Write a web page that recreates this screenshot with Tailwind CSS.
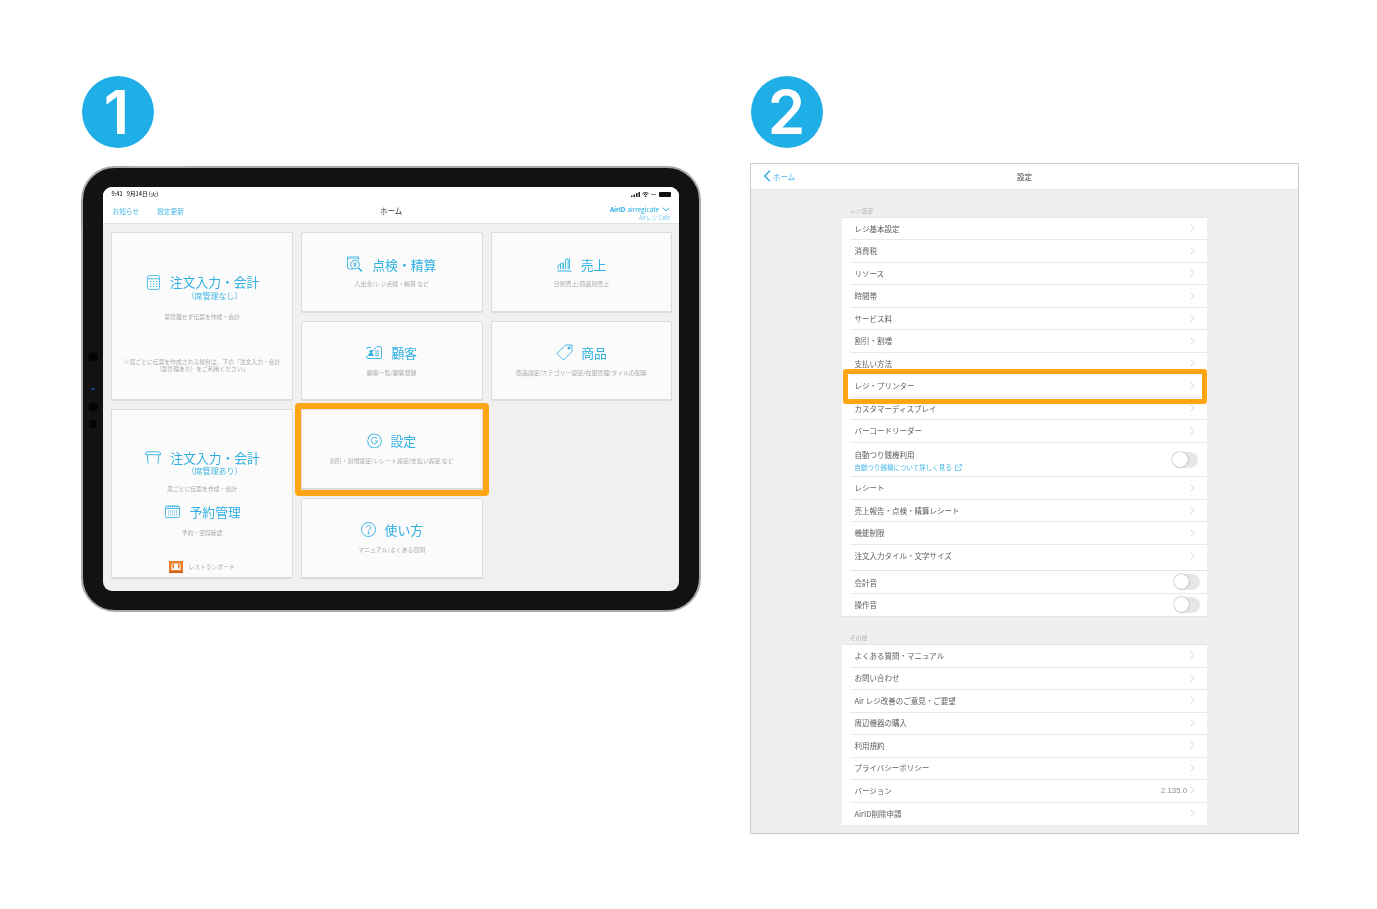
<!DOCTYPE html>
<html lang="ja">
<head>
<meta charset="utf-8">
<title>設定</title>
<script src="https://cdn.jsdelivr.net/npm/@tailwindcss/browser@4"></script>
</head>
<body class="bg-white font-['Noto_Sans_CJK_JP','Noto_Sans',sans-serif]">
<div class="flex h-[909px] w-[1377px] overflow-hidden bg-white pl-[81px] pt-[76px] blur-[0.3px]">

  <!-- Step 1 -->
  <section class="w-[620px]">
    <div class="ml-px flex h-[72px] w-[72px] items-center justify-center rounded-full bg-[#1fafe6] pr-[3px] font-['Inter',sans-serif] text-[60px] font-semibold leading-none text-white">1</div>
    <div class="relative mt-[18px] h-[446px] w-[620px] rounded-[34px] border-2 border-[#a9a9a9] bg-[#121212] pb-[20px] pl-[20px] pr-[20px] pt-[19px]">
      <span class="absolute -top-[2.5px] left-[48px] h-px w-[28px] bg-[#b5b5b5]"></span>
      <span class="absolute -top-[2.5px] left-[76px] h-px w-[28px] bg-[#b5b5b5]"></span>
      <span class="absolute -left-[2.5px] top-[32px] h-[27px] w-px bg-[#999]"></span>
      <span class="absolute left-[5px] top-[184px] h-[10px] w-[10px] rounded-full bg-[#050505]"></span>
      <span class="absolute left-[8px] top-[220px] h-[1.5px] w-[1.5px] rounded-full bg-[#1d4f9c]"></span>
      <span class="absolute left-[10px] top-[220px] h-[1.5px] w-[1.5px] rounded-full bg-[#1d4f9c]"></span>
      <span class="absolute left-[5px] top-[234px] h-[10px] w-[10px] rounded-full bg-[#050505]"></span>
      <span class="absolute left-[6px] top-[252px] h-[8px] w-[8px] rounded-full bg-[#050505]"></span>

      <div class="relative flex h-[404px] w-[576px] flex-col overflow-hidden rounded-[9px] bg-[#f0f0f0]">
        <header class="h-[36.500px] shrink-0 border-b border-[#e2e2e2] bg-white">
          <div class="flex h-[14px] items-center justify-between pl-[8.5px] pr-[8px] pt-[0.5px] text-[5.6px] font-medium text-[#222]">
            <span class="flex gap-[4px]"><span>9:41</span><span>9月14日 (火)</span></span>
            <span class="flex items-center gap-[2px]">
              <svg width="9" height="5" viewBox="0 0 9 5"><path d="M0 3.5h1.5V5H0zM2.500 2.500H4V5H2.500zM5 1h1.500v4H5zM7.500 0H9v5H7.500z" fill="#222"/></svg>
              <svg width="7" height="5" viewBox="0 0 7 5"><path d="M.5 1.800a4.200 4.200 0 0 1 6 0M1.600 3a2.600 2.600 0 0 1 3.800 0" fill="none" stroke="#222"/><circle cx="3.500" cy="4.300" r=".8" fill="#222"/></svg>
              <span class="h-px w-[5px] bg-[#888]"></span>
              <span class="ml-px h-[4.500px] w-[12px] rounded-[1px] bg-[#111]"></span>
            </span>
          </div>
          <div class="relative flex h-[21px] items-center pl-[9.5px] pr-[9px] text-[6.7px] text-[#45b8e8]">
            <span>お知らせ</span>
            <span class="ml-[18px]">設定更新</span>
            <span class="absolute left-[277px] top-[2px] text-[7.500px] leading-[15px] text-[#333]">ホーム</span>
            <div class="ml-auto mt-[3px] flex flex-col items-end">
              <span class="flex items-center gap-[2px] text-[6.400px] leading-[9px] text-[#25ace4]"><b class="font-bold">AirID</b><span>airregicate</span>
                <svg class="ml-px" width="8" height="5" viewBox="0 0 8 5"><path d="M.6.6l3.400 3.400L7.400.6" fill="none" stroke="#25ace4" stroke-width="1"/></svg></span>
              <span class="text-[5.600px] leading-[8px] text-[#7accee]">Airレジ Cafe</span>
            </div>
          </div>
        </header>

        <div class="grid grid-cols-[repeat(3,181.67px)] grid-rows-[repeat(4,80.67px)] gap-2 pl-[8.300px] pt-[8.500px]">

          <article class="row-span-2 flex flex-col items-center rounded-[2px] border border-b-2 border-[#dcdcdc] bg-[#fbfbfb] pt-[40px]">
            <div class="flex h-[18px] items-center gap-[10px] pl-[2px] text-[12.800px] text-[#2fb0e4]">
              <svg width="13" height="15" viewBox="0 0 13 15" fill="none" stroke="#2fb0e4" stroke-width=".8"><rect x=".5" y=".5" width="12" height="14" rx="2"/><path d="M.5 3.800h12M3 6.500h1.500M6 6.500h1.500M9 6.500h1.500M3 9h1.500M6 9h1.500M9 9h1.500M3 11.500h1.500M6 11.500h1.500M9 11.500h1.500"/></svg>
              <span>注文入力・会計</span>
            </div>
            <p class="-mt-[1px] pl-[25px] text-[8px] leading-[11px] text-[#42b7e7]">（席管理なし）</p>
            <p class="mt-[11px] text-[5.800px] leading-[10px] text-[#a8a8a8]">席管理せず伝票を作成・会計</p>
            <p class="mt-[37px] text-center text-[5.800px] leading-[6.500px] text-[#aaa]">※席ごとに伝票を作成される場合は、下の「注文入力・会計<br>（席管理あり）をご利用ください」</p>
          </article>

          <article class="flex flex-col items-center justify-center rounded-[2px] border border-b-2 border-[#dcdcdc] bg-[#fbfbfb] pt-[1px]">
            <div class="flex h-[18px] items-center gap-[9px] text-[12.800px] text-[#2fb0e4]">
              <svg width="16" height="16" viewBox="0 0 16 16" fill="none" stroke="#2fb0e4" stroke-width=".9"><path d="M6 13H2.500a2 2 0 0 1-2-2V1h11v3.500"/><path d="M.5 2.500h11" stroke-dasharray="1 1"/><circle cx="8" cy="8.500" r="4.300"/><path d="M6.300 6.200L8 8.500l1.700-2.300M8 8.500v2.600M6.500 9h3"/><path d="M11.200 11.700l3.800 3.800" stroke-width="1.500"/></svg>
              <span>点検・精算</span>
            </div>
            <p class="mt-[6px] text-[5.900px] leading-[10px] text-[#a8a8a8]">入出金/レジ点検・精算 など</p>
          </article>

          <article class="flex flex-col items-center justify-center rounded-[2px] border border-b-2 border-[#dcdcdc] bg-[#fbfbfb] pt-[1px]">
            <div class="flex h-[18px] items-center gap-[9px] text-[12.800px] text-[#2fb0e4]">
              <svg width="15" height="15" viewBox="0 0 15 15" fill="none" stroke="#2fb0e4" stroke-width=".9"><path d="M1 12V9a1 1 0 0 1 2.500 0v3M3.500 12V7a1.200 1.200 0 0 1 2.500 0v5M6.500 12V6M8.500 12V3a1.300 1.300 0 0 1 2.600 0v9M12.500 12V1"/><path d="M.5 14h14" stroke-width="1.100"/></svg>
              <span>売上</span>
            </div>
            <p class="mt-[6px] text-[5.900px] leading-[10px] text-[#a8a8a8]">日別売上/商品別売上</p>
          </article>

          <article class="flex flex-col items-center justify-center rounded-[2px] border border-b-2 border-[#dcdcdc] bg-[#fbfbfb]">
            <div class="flex h-[18px] items-center gap-[9px] text-[12.800px] text-[#2fb0e4]">
              <svg width="16" height="13" viewBox="0 0 16 13" fill="none" stroke="#2fb0e4" stroke-width=".9"><path d="M.5 3a1.500 1.500 0 0 1 1.500-1.500h3M10 1.500l1-1h2.500a2 2 0 0 1 2 2V11a1.500 1.500 0 0 1-1.500 1.500H2A1.500 1.500 0 0 1 .5 11z"/><circle cx="5" cy="5.500" r="1.200" fill="#2fb0e4"/><path d="M2.800 9.500c0-3 4.400-3 4.400 0z" fill="#2fb0e4"/><path d="M9 5h4M9 7.200h4M9 9.400h4"/></svg>
              <span>顧客</span>
            </div>
            <p class="mt-[6.500px] text-[5.900px] leading-[10px] text-[#a8a8a8]">顧客一覧/顧客登録</p>
          </article>

          <article class="flex flex-col items-center justify-center rounded-[2px] border border-b-2 border-[#dcdcdc] bg-[#fbfbfb]">
            <div class="flex h-[18px] items-center gap-[8px] text-[12.800px] text-[#2fb0e4]">
              <svg width="17" height="17" viewBox="0 0 17 17" fill="none" stroke="#2fb0e4" stroke-width=".9"><path d="M9.500 1H16v6.500L7.500 16 1 9.500z"/><circle cx="13" cy="4" r="1.100" fill="#2fb0e4"/></svg>
              <span>商品</span>
            </div>
            <p class="mt-[6.500px] text-[5.900px] leading-[10px] text-[#a8a8a8]">商品設定/カテゴリー設定/在庫管理/タイルの配置</p>
          </article>

          <article class="row-span-2 flex flex-col items-center rounded-[2px] border border-b-2 border-[#dcdcdc] bg-[#fbfbfb] pt-[38.500px]">
            <div class="flex h-[18px] items-center gap-[9px] pl-[1px] text-[12.800px] text-[#2fb0e4]">
              <svg width="16" height="13" viewBox="0 0 16 13" fill="none" stroke="#2fb0e4" stroke-width=".9"><path d="M.5 2.200C.5 1 2 .7 8 .7s7.500.3 7.500 1.500v1.500H.5zM2.300 3.700L3 12.500M13.700 3.700L13 12.500"/></svg>
              <span>注文入力・会計</span>
            </div>
            <p class="-mt-[2px] pl-[25px] text-[8px] leading-[11px] text-[#42b7e7]">（席管理あり）</p>
            <p class="mt-[8.500px] text-[5.800px] leading-[10px] text-[#a8a8a8]">席ごとに伝票を作成・会計</p>
            <div class="mt-[8px] flex h-[18px] items-center gap-[10px] pl-[1px] text-[12.800px] text-[#2fb0e4]">
              <svg width="15" height="13" viewBox="0 0 15 13" fill="none" stroke="#2fb0e4" stroke-width=".8"><rect x=".5" y="1.200" width="14" height="11.300" rx=".8"/><path d="M3 0v2.500M5.200 0v2.500M7.500 0v2.500M9.800 0v2.500M12 0v2.500M.5 3.500h14"/><path d="M3 6h9M3 8h9M3 10h9" stroke-dasharray="1 1"/></svg>
              <span>予約管理</span>
            </div>
            <p class="mt-[8px] text-[5.800px] leading-[10px] text-[#a8a8a8]">予約・空席確認</p>
            <div class="mt-[23px] flex items-center gap-[5px]">
              <svg width="14" height="12" viewBox="0 0 14 12"><rect width="14" height="12" fill="#ee7d2c"/><rect y="10.500" width="14" height="1.500" fill="#c95f17"/><rect x="2.500" y="2.500" width="9" height="6.500" fill="#fff"/><rect x="3.500" y="2.500" width="1.500" height="5" fill="#ee7d2c"/><rect x="9" y="2.500" width="1.500" height="5" fill="#ee7d2c"/></svg>
              <span class="text-[5.800px] leading-[10px] text-[#a8a8a8]">レストランボード</span>
            </div>
          </article>

          <article class="flex flex-col items-center justify-center rounded-[2px] border border-b-2 border-[#dcdcdc] bg-[#fbfbfb]">
            <div class="flex h-[18px] items-center gap-[8px] text-[12.800px] text-[#2fb0e4]">
              <svg width="15" height="15" viewBox="0 0 15 15" fill="none" stroke="#2fb0e4" stroke-width=".9"><path d="M7.500.8l1.700 1.100 2-.2.900 1.800 1.800.9-.2 2 1 1.600-1 1.600.2 2-1.800.9-.9 1.800-2-.2-1.700 1.100-1.700-1.100-2 .2-.9-1.800-1.800-.9.2-2L.5 7.500l1-1.600-.2-2 1.800-.9.900-1.800 2 .2z"/><path d="M10.300 5.800A3.200 3.200 0 1 0 10.700 8H8.200"/></svg>
              <span>設定</span>
            </div>
            <p class="mt-[6.500px] text-[5.900px] leading-[10px] text-[#a8a8a8]">割引・割増設定/レシート設定/支払い設定 など</p>
          </article>

          <div></div>

          <article class="flex flex-col items-center justify-center rounded-[2px] border border-b-2 border-[#dcdcdc] bg-[#fbfbfb]">
            <div class="flex h-[18px] items-center gap-[9px] text-[12.800px] text-[#2fb0e4]">
              <svg width="15" height="15" viewBox="0 0 15 15" fill="none" stroke="#2fb0e4" stroke-width=".9"><circle cx="7.500" cy="7.500" r="7"/><path d="M5.300 5.700a2.200 2.200 0 1 1 3.400 1.900c-.8.500-1.200.9-1.200 1.900"/><circle cx="7.500" cy="11.200" r=".6" fill="#2fb0e4"/></svg>
              <span>使い方</span>
            </div>
            <p class="mt-[6.500px] text-[5.900px] leading-[10px] text-[#a8a8a8]">マニュアル/よくある質問</p>
          </article>
        </div>
      </div>

      <div class="absolute left-[212px] top-[234.700px] h-[93.500px] w-[194px] rounded-[4px] border-[6px] border-[#ffa514]"></div>
    </div>
  </section>

  <!-- Step 2 -->
  <section class="ml-[49px] w-[549px]">
    <div class="ml-px flex h-[72px] w-[72px] items-center justify-center rounded-full bg-[#1fafe6] pr-[1px] font-['Inter',sans-serif] text-[60px] font-semibold leading-none text-white">2</div>
    <div class="mt-[15px] flex h-[671px] w-[549px] flex-col border border-[#cbcbcb] bg-[#efefef]">
      <header class="relative flex h-[25.500px] shrink-0 items-center justify-center border-b border-[#e3e3e3] bg-white text-[7.500px] text-[#444]">
        <span class="absolute left-[12px] flex items-center gap-[2px] text-[#43b5e6]">
          <svg width="8" height="12" viewBox="0 0 8 12"><path d="M7 .8L1.600 6 7 11.200" fill="none" stroke="#25ace4" stroke-width="1.300"/></svg>
          <span>ホーム</span>
        </span>
        <span>設定</span>
      </header>

      <div class="ml-[91px] w-[365px]">
        <p class="pl-2 pt-[14px] text-[5.800px] leading-[13.500px] text-[#b0b0b0]">レジ設定</p>

        <div class="relative border-y border-[#e4e4e4] bg-white text-[7.500px] text-[#5c5c5c]">
          <div class="ml-2 flex h-[22.400px] items-center justify-between border-b border-[#e9e9e9] pb-px pl-[4.500px] pr-[12px]"><span>レジ基本設定</span><svg width="5" height="8" viewBox="0 0 5 8"><path d="M.7.7L4.200 4 .7 7.300" fill="none" stroke="#c8c8c8" stroke-width=".8"/></svg></div>
          <div class="ml-2 flex h-[22.500px] items-center justify-between border-b border-[#e9e9e9] pb-px pl-[4.500px] pr-[12px]"><span>消費税</span><svg width="5" height="8" viewBox="0 0 5 8"><path d="M.7.7L4.200 4 .7 7.300" fill="none" stroke="#c8c8c8" stroke-width=".8"/></svg></div>
          <div class="ml-2 flex h-[22.500px] items-center justify-between border-b border-[#e9e9e9] pb-px pl-[4.500px] pr-[12px]"><span>リソース</span><svg width="5" height="8" viewBox="0 0 5 8"><path d="M.7.7L4.200 4 .7 7.300" fill="none" stroke="#c8c8c8" stroke-width=".8"/></svg></div>
          <div class="ml-2 flex h-[22.500px] items-center justify-between border-b border-[#e9e9e9] pb-px pl-[4.500px] pr-[12px]"><span>時間帯</span><svg width="5" height="8" viewBox="0 0 5 8"><path d="M.7.7L4.200 4 .7 7.300" fill="none" stroke="#c8c8c8" stroke-width=".8"/></svg></div>
          <div class="ml-2 flex h-[22.500px] items-center justify-between border-b border-[#e9e9e9] pb-px pl-[4.500px] pr-[12px]"><span>サービス料</span><svg width="5" height="8" viewBox="0 0 5 8"><path d="M.7.7L4.200 4 .7 7.300" fill="none" stroke="#c8c8c8" stroke-width=".8"/></svg></div>
          <div class="ml-2 flex h-[22.500px] items-center justify-between border-b border-[#e9e9e9] pb-px pl-[4.500px] pr-[12px]"><span>割引・割増</span><svg width="5" height="8" viewBox="0 0 5 8"><path d="M.7.7L4.200 4 .7 7.300" fill="none" stroke="#c8c8c8" stroke-width=".8"/></svg></div>
          <div class="ml-2 flex h-[22.500px] items-center justify-between border-b border-[#e9e9e9] pb-px pl-[4.500px] pr-[12px]"><span>支払い方法</span><svg width="5" height="8" viewBox="0 0 5 8"><path d="M.7.7L4.200 4 .7 7.300" fill="none" stroke="#c8c8c8" stroke-width=".8"/></svg></div>
          <div class="ml-2 flex h-[22.500px] items-center justify-between border-b border-[#e9e9e9] pb-px pl-[4.500px] pr-[12px]"><span>レジ・プリンター</span><svg width="5" height="8" viewBox="0 0 5 8"><path d="M.7.7L4.200 4 .7 7.300" fill="none" stroke="#c8c8c8" stroke-width=".8"/></svg></div>
          <div class="ml-2 flex h-[22.500px] items-center justify-between border-b border-[#e9e9e9] pb-px pl-[4.500px] pr-[12px]"><span>カスタマーディスプレイ</span><svg width="5" height="8" viewBox="0 0 5 8"><path d="M.7.7L4.200 4 .7 7.300" fill="none" stroke="#c8c8c8" stroke-width=".8"/></svg></div>
          <div class="ml-2 flex h-[22.500px] items-center justify-between border-b border-[#e9e9e9] pb-px pl-[4.500px] pr-[12px]"><span>バーコードリーダー</span><svg width="5" height="8" viewBox="0 0 5 8"><path d="M.7.7L4.200 4 .7 7.300" fill="none" stroke="#c8c8c8" stroke-width=".8"/></svg></div>
          <div class="ml-2 flex h-[34.500px] items-center justify-between border-b border-[#e9e9e9] pl-[4.500px] pr-[9px]">
            <div class="flex flex-col pt-[2px]">
              <span class="leading-[11px]">自動つり銭機利用</span>
              <span class="mt-[3.500px] flex items-center gap-[3px] text-[6.500px] leading-[9px] text-[#45b8e8]">自動つり銭機について詳しく見る
                <svg width="7" height="7" viewBox="0 0 7 7" fill="none" stroke="#45b8e8" stroke-width=".7"><path d="M3 1.200H.5v5.300h5.300V4M3 4l3.500-3.500M4.200.4h2.400v2.400"/></svg></span>
            </div>
            <span class="relative h-[16px] w-[26px] rounded-full bg-[#e6e6e8]"><span class="absolute left-0 top-0 h-[15.500px] w-[15.500px] rounded-full bg-white shadow-[0_0_1.500px_#777]"></span></span>
          </div>
          <div class="ml-2 flex h-[22.500px] items-center justify-between border-b border-[#e9e9e9] pb-px pl-[4.500px] pr-[12px]"><span>レシート</span><svg width="5" height="8" viewBox="0 0 5 8"><path d="M.7.7L4.200 4 .7 7.300" fill="none" stroke="#c8c8c8" stroke-width=".8"/></svg></div>
          <div class="ml-2 flex h-[22.500px] items-center justify-between border-b border-[#e9e9e9] pb-px pl-[4.500px] pr-[12px]"><span>売上報告・点検・精算レシート</span><svg width="5" height="8" viewBox="0 0 5 8"><path d="M.7.7L4.200 4 .7 7.300" fill="none" stroke="#c8c8c8" stroke-width=".8"/></svg></div>
          <div class="ml-2 flex h-[22.500px] items-center justify-between border-b border-[#e9e9e9] pb-px pl-[4.500px] pr-[12px]"><span>機能制限</span><svg width="5" height="8" viewBox="0 0 5 8"><path d="M.7.7L4.200 4 .7 7.300" fill="none" stroke="#c8c8c8" stroke-width=".8"/></svg></div>
          <div class="ml-2 flex h-[26.500px] items-center justify-between border-b border-[#e4e4e4] pb-[4px] pl-[4.500px] pr-[12px]"><span>注文入力タイル・文字サイズ</span><svg width="5" height="8" viewBox="0 0 5 8"><path d="M.7.7L4.200 4 .7 7.300" fill="none" stroke="#c8c8c8" stroke-width=".8"/></svg></div>
          <div class="ml-2 flex h-[22.500px] items-center justify-between border-b border-[#e9e9e9] pl-[4.500px] pr-[7px]"><span>会計音</span>
            <span class="relative h-[15.500px] w-[26px] rounded-full bg-[#e6e6e8]"><span class="absolute left-0 top-0 h-[15px] w-[15px] rounded-full bg-white shadow-[0_0_1.500px_#777]"></span></span></div>
          <div class="ml-2 flex h-[22px] items-center justify-between pl-[4.500px] pr-[7px]"><span>操作音</span>
            <span class="relative h-[15.500px] w-[26px] rounded-full bg-[#e6e6e8]"><span class="absolute left-0 top-0 h-[15px] w-[15px] rounded-full bg-white shadow-[0_0_1.500px_#777]"></span></span></div>

          <div class="absolute left-[1.300px] top-[151px] h-[34.700px] w-[363.700px] rounded-[3px] border-[5px] border-[#ffa514]"></div>
        </div>

        <p class="pl-2 pt-[14.500px] text-[5.800px] leading-[13px] text-[#b0b0b0]">その他</p>

        <div class="border-t border-[#e4e4e4] bg-white text-[7.500px] text-[#5c5c5c]">
          <div class="ml-2 flex h-[22.500px] items-center justify-between border-b border-[#e9e9e9] pb-[1.500px] pl-[4.500px] pr-[12px]"><span>よくある質問・マニュアル</span><svg width="5" height="8" viewBox="0 0 5 8"><path d="M.7.7L4.200 4 .7 7.300" fill="none" stroke="#c8c8c8" stroke-width=".8"/></svg></div>
          <div class="ml-2 flex h-[22.500px] items-center justify-between border-b border-[#e9e9e9] pb-[1.500px] pl-[4.500px] pr-[12px]"><span>お問い合わせ</span><svg width="5" height="8" viewBox="0 0 5 8"><path d="M.7.7L4.200 4 .7 7.300" fill="none" stroke="#c8c8c8" stroke-width=".8"/></svg></div>
          <div class="ml-2 flex h-[22.500px] items-center justify-between border-b border-[#e9e9e9] pb-[1.500px] pl-[4.500px] pr-[12px]"><span>Air レジ改善のご意見・ご要望</span><svg width="5" height="8" viewBox="0 0 5 8"><path d="M.7.7L4.200 4 .7 7.300" fill="none" stroke="#c8c8c8" stroke-width=".8"/></svg></div>
          <div class="ml-2 flex h-[22.500px] items-center justify-between border-b border-[#e9e9e9] pb-[1.500px] pl-[4.500px] pr-[12px]"><span>周辺機器の購入</span><svg width="5" height="8" viewBox="0 0 5 8"><path d="M.7.7L4.200 4 .7 7.300" fill="none" stroke="#c8c8c8" stroke-width=".8"/></svg></div>
          <div class="ml-2 flex h-[22.500px] items-center justify-between border-b border-[#e9e9e9] pb-[1.500px] pl-[4.500px] pr-[12px]"><span>利用規約</span><svg width="5" height="8" viewBox="0 0 5 8"><path d="M.7.7L4.200 4 .7 7.300" fill="none" stroke="#c8c8c8" stroke-width=".8"/></svg></div>
          <div class="ml-2 flex h-[22.500px] items-center justify-between border-b border-[#e9e9e9] pb-[1.500px] pl-[4.500px] pr-[12px]"><span>プライバシーポリシー</span><svg width="5" height="8" viewBox="0 0 5 8"><path d="M.7.7L4.200 4 .7 7.300" fill="none" stroke="#c8c8c8" stroke-width=".8"/></svg></div>
          <div class="ml-2 flex h-[22.500px] items-center justify-between border-b border-[#e9e9e9] pb-[1.500px] pl-[4.500px] pr-[12px]"><span>バージョン</span><span class="flex items-center gap-[3px]"><span class="font-['Liberation_Sans',sans-serif] text-[7.800px] text-[#8e8e8e]">2.135.0</span><svg width="5" height="8" viewBox="0 0 5 8"><path d="M.7.7L4.200 4 .7 7.300" fill="none" stroke="#c8c8c8" stroke-width=".8"/></svg></span></div>
          <div class="ml-2 flex h-[22.500px] items-center justify-between pb-[1.500px] pl-[4.500px] pr-[12px]"><span>AirID削除申請</span><svg width="5" height="8" viewBox="0 0 5 8"><path d="M.7.7L4.200 4 .7 7.300" fill="none" stroke="#c8c8c8" stroke-width=".8"/></svg></div>
        </div>
      </div>
    </div>
  </section>
</div>
</body>
</html>
